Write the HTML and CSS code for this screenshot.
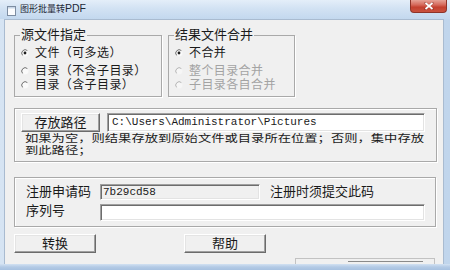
FILE: index.html
```html
<!DOCTYPE html>
<html lang="zh-CN">
<head>
<meta charset="utf-8">
<title>图形批量转PDF</title>
<link rel="stylesheet" href="styles.css">
</head>
<body>
<div class="win">
  <div class="titlebar">
    <svg class="appicon" viewBox="0 0 9 10" width="9" height="10"><rect x="0.5" y="0.5" width="8" height="9" fill="#fbfcfe" stroke="#7d8da2"/><rect x="1" y="1" width="7" height="1.5" fill="#c9d7e8"/></svg>
    <span class="title">图形批量转<span class="lat">PDF</span></span>
    <div class="close"><svg viewBox="0 0 10 8" width="10" height="8"><path d="M1.5 1 L8.5 7 M8.5 1 L1.5 7" stroke="#5a1a14" stroke-width="2.6" stroke-linecap="round" opacity="0.35"/><path d="M1.5 1 L8.5 7 M8.5 1 L1.5 7" stroke="#ffffff" stroke-width="1.7"/></svg></div>
  </div>
  <div class="main">
    <div class="client">
      <div class="row1">
        <fieldset class="grp g1">
          <legend>源文件指定</legend>
          <div class="opt"><svg class="radio" viewBox="0 0 8 8" width="8" height="8"><circle cx="4" cy="4" r="3.4" fill="#fafafa"/><path d="M6.4 1.6 A3.4 3.4 0 0 0 1.6 6.4" fill="none" stroke="#6e6e6e"/><circle cx="4" cy="4" r="1.4" fill="#1e1e1e"/></svg><span>文件（可多选）</span></div>
          <div class="opt r2"><svg class="radio" viewBox="0 0 8 8" width="8" height="8"><circle cx="4" cy="4" r="3.4" fill="#fafafa"/><path d="M6.4 1.6 A3.4 3.4 0 0 0 1.6 6.4" fill="none" stroke="#6e6e6e"/></svg><span>目录（不含子目录）</span></div>
          <div class="opt"><svg class="radio" viewBox="0 0 8 8" width="8" height="8"><circle cx="4" cy="4" r="3.4" fill="#fafafa"/><path d="M6.4 1.6 A3.4 3.4 0 0 0 1.6 6.4" fill="none" stroke="#6e6e6e"/></svg><span>目录（含子目录）</span></div>
        </fieldset>
        <fieldset class="grp g2">
          <legend>结果文件合并</legend>
          <div class="opt"><svg class="radio" viewBox="0 0 8 8" width="8" height="8"><circle cx="4" cy="4" r="3.4" fill="#fafafa"/><path d="M6.4 1.6 A3.4 3.4 0 0 0 1.6 6.4" fill="none" stroke="#6e6e6e"/><circle cx="4" cy="4" r="1.4" fill="#1e1e1e"/></svg><span>不合并</span></div>
          <div class="opt r2 dis"><svg class="radio" viewBox="0 0 8 8" width="8" height="8"><circle cx="4" cy="4" r="3.4" fill="#f6f6f6"/><path d="M6.4 1.6 A3.4 3.4 0 0 0 1.6 6.4" fill="none" stroke="#b4b4b4"/></svg><span>整个目录合并</span></div>
          <div class="opt dis"><svg class="radio" viewBox="0 0 8 8" width="8" height="8"><circle cx="4" cy="4" r="3.4" fill="#f6f6f6"/><path d="M6.4 1.6 A3.4 3.4 0 0 0 1.6 6.4" fill="none" stroke="#b4b4b4"/></svg><span>子目录各自合并</span></div>
        </fieldset>
      </div>

      <div class="box grp3">
        <div class="pathrow">
          <button class="btn btn-path" type="button">存放路径</button>
          <div class="field field-path">C:\Users\Administrator\Pictures</div>
        </div>
        <div class="hint">如果为空，则结果存放到原始文件或目录所在位置；否则，集中存放<br>到此路径；</div>
      </div>

      <div class="box grp4">
        <div class="regrow">
          <span class="lbl">注册申请码</span>
          <div class="field field-code">7b29cd58</div>
          <span class="note">注册时须提交此码</span>
        </div>
        <div class="regrow r-serial">
          <span class="lbl">序列号</span>
          <div class="field field-serial"></div>
        </div>
      </div>

      <div class="actions">
        <button class="btn btn-act" type="button">转换</button>
        <button class="btn btn-act" type="button">帮助</button>
      </div>

      <div class="progress"><div class="progress-fill"></div></div>
    </div>
  </div>
  <div class="bottomframe"></div>
</div>
</body>
</html>
```

FILE: styles.css
```css
* { box-sizing: border-box; }
html, body { margin: 0; padding: 0; }
body {
  width: 450px;
  height: 270px;
  overflow: hidden;
  font-family: "Liberation Sans", "Noto Sans CJK SC", sans-serif;
  font-size: 13px;
  color: #1a1a1a;
  background: #c3d6ec;
}
.win {
  width: 450px;
  height: 270px;
  display: flex;
  flex-direction: column;
  background: linear-gradient(90deg, #d6e4f3 0%, #c7daee 50%, #c0d5ec 100%);
}
.titlebar {
  height: 19px;
  flex: none;
  display: flex;
  align-items: flex-start;
  padding-left: 7px;
  background: linear-gradient(#e4eef9, #d2e2f3 45%, #c3d8ee);
}
.appicon { margin-top: 6px; flex: none; display: block; }
.title {
  margin-left: 4px;
  margin-top: 2px;
  font-size: 9px;
  line-height: 13px;
  color: #1e2a38;
  white-space: nowrap;
}
.title .lat { font-size: 10.5px; }
.close {
  margin-left: auto;
  margin-right: 3px;
  width: 37px;
  height: 13px;
  border: 1px solid #8e3328;
  border-top: none;
  border-radius: 0 0 4px 4px;
  background: linear-gradient(#e6a296 0%, #d66a5c 40%, #c4402f 60%, #c9523f 100%);
  display: flex;
  align-items: center;
  justify-content: center;
}
.close svg { display: block; }
.main {
  flex: none;
  height: 245px;
  display: flex;
}
.client {
  margin-left: 4px;
  width: 440px;
  height: 245px;
  background: #f0f0f0;
  border: 1px solid #a9bbd0;
  border-bottom: none;
  padding: 8px 0 0 9px;
  overflow: hidden;
}
.bottomframe {
  flex: 1;
  background: linear-gradient(#d2e1f2, #b3cae5 50%, #a7c1e0);
}

/* group boxes */
.row1 { display: flex; gap: 6px; }
.grp {
  margin: 0;
  padding: 4px 0 4px 5px;
  border: 1px solid #a9a9a9;
  box-shadow: 1px 1px 0 #ffffff;
  min-width: 0;
}
.g1 { width: 148px; }
.g2 { width: 127px; }
legend {
  padding: 0 1px;
  height: 14px;
  line-height: 14px;
  font-size: 13px;
  color: #1a1a1a;
  white-space: nowrap;
}
.opt {
  display: flex;
  align-items: center;
  height: 14px;
  line-height: 14px;
  white-space: nowrap;
  font-size: 12px;
  letter-spacing: 0.4px;
  padding-left: 1px;
}
.opt.r2 { margin-top: 4px; }
.radio { display: block; flex: none; margin-right: 6px; }
.opt.dis { color: #a3a3a3; }

.box {
  border: 1px solid #a9a9a9;
  box-shadow: 1px 1px 0 #ffffff, inset 1px 1px 0 #ffffff;
}
.grp3 {
  margin-top: 11px;
  width: 423px;
  height: 54px;
  padding: 4px 0 0 6px;
}
.pathrow { display: flex; gap: 7px; }
.btn {
  font-family: "Liberation Sans", "Noto Sans CJK SC", sans-serif;
  font-size: 13px;
  line-height: 17px;
  color: #1a1a1a;
  padding: 0;
  margin: 0;
  height: 19px;
  background: #f0f0f0;
  border: 1px solid;
  border-color: #ffffff #6b6b6b #6b6b6b #ffffff;
  box-shadow: inset -1px -1px 0 #a0a0a0, inset 1px 1px 0 #e4e4e4;
  border-radius: 0;
}
.btn-path { width: 79px; }
.field {
  background: #ffffff;
  border: 1px solid;
  border-color: #a0a0a0 #ffffff #ffffff #a0a0a0;
  box-shadow: inset 1px 1px 0 #6d6d6d, inset -1px -1px 0 #e3e3e3;
  font-family: "Liberation Mono", "DejaVu Sans Mono", monospace;
  font-size: 11px;
  color: #1a1a1a;
  white-space: nowrap;
  overflow: hidden;
}
.field-path {
  width: 318px;
  height: 19px;
  line-height: 17px;
  padding-left: 4px;
}
.hint {
  margin-top: 1px;
  margin-left: 4px;
  font-size: 10px;
  line-height: 11.5px;
  white-space: nowrap;
  transform: scaleX(1.33);
  transform-origin: left top;
}

.grp4 {
  margin-top: 15px;
  width: 422px;
  height: 50px;
  padding: 6px 0 0 11px;
}
.regrow { display: flex; align-items: center; }
.lbl { width: 74px; flex: none; line-height: 14px; white-space: nowrap; }
.field-code {
  width: 160px;
  height: 16px;
  line-height: 14px;
  padding-left: 2px;
  background: #f0f0f0;
}
.note { margin-left: 10px; line-height: 14px; white-space: nowrap; }
.r-serial { margin-top: 4px; align-items: flex-start; }
.field-serial { width: 325px; height: 17px; }

.actions { display: flex; gap: 88px; margin-top: 7px; }
.btn-act { width: 82px; }

.progress {
  margin-top: 5px;
  margin-left: 281px;
  width: 140px;
  height: 10px;
  border: 1px solid #c2c2c2;
  border-bottom: none;
  padding: 2px 0 0 52px;
}
.progress-fill { width: 75px; height: 1px; background: #8a8a8a; }
```
